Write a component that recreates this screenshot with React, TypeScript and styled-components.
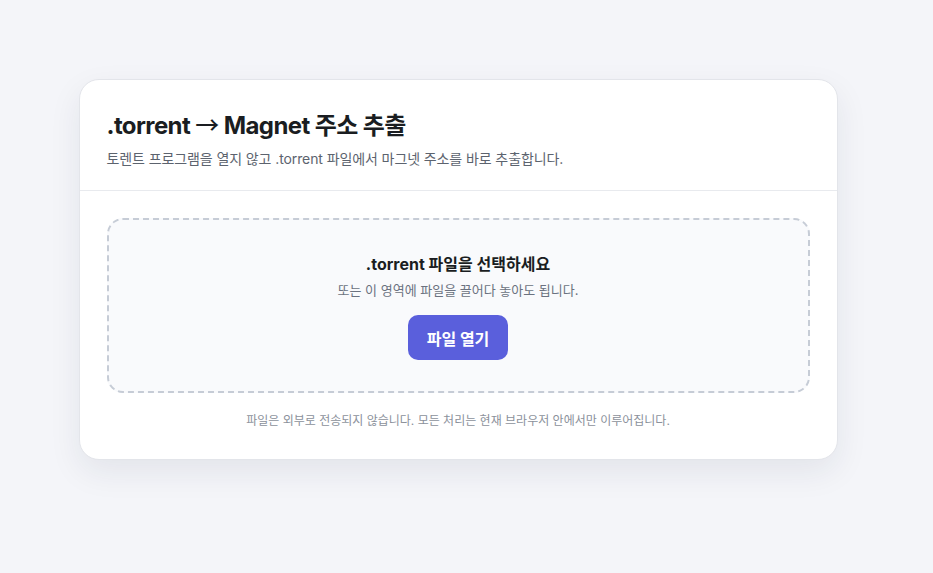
import React from "react";
import styled, { createGlobalStyle } from "styled-components";

const GlobalStyle = createGlobalStyle`
  html, body {
    margin: 0;
    padding: 0;
    background: #f4f5f9;
    font-family: "Inter", "Noto Sans CJK KR", sans-serif;
    color: #1f2328;
  }
  * { box-sizing: border-box; }
`;

const Page = styled.div`
  display: flex;
  align-items: flex-start;
  justify-content: center;
  padding: 79px 17px 0 0;
  min-height: 573px;
`;

const Card = styled.div`
  width: 759px;
  background: #ffffff;
  border: 1px solid #e3e5ea;
  border-radius: 20px;
  box-shadow: 0 12px 32px rgba(30, 40, 70, 0.08);
`;

const Header = styled.div`
  padding: 28px 27px 21px;
  border-bottom: 1px solid #e8eaee;
`;

const Title = styled.h1`
  margin: 0;
  font-size: 24px;
  font-weight: 700;
  line-height: 32px;
  letter-spacing: -0.6px;
  color: #1a1d21;
`;

const Arrow = styled.span`
  font-family: "Noto Sans CJK KR", sans-serif;
  font-weight: 500;
`;

const Subtitle = styled.p`
  margin: 7px 0 0;
  font-size: 14px;
  line-height: 20px;
  letter-spacing: -0.1px;
  color: #5c636e;
`;

const Body = styled.div`
  padding: 27px 27px 29px;
`;

const DropZone = styled.div`
  border: 2px dashed #c6ccd6;
  border-radius: 16px;
  background: #f9fafc;
  height: 175px;
  display: flex;
  flex-direction: column;
  align-items: center;
  padding-top: 32px;
`;

const DropTitle = styled.div`
  font-size: 16px;
  font-weight: 700;
  line-height: 24px;
  color: #1a1d21;
`;

const DropHint = styled.div`
  margin-top: 5px;
  font-size: 13px;
  line-height: 18px;
  color: #6b7280;
`;

const OpenButton = styled.button`
  margin-top: 16px;
  width: 100px;
  height: 45px;
  border: none;
  border-radius: 10px;
  background: #5a5fdc;
  color: #ffffff;
  font-family: inherit;
  font-size: 16px;
  font-weight: 700;
  cursor: pointer;
`;

const Note = styled.p`
  margin: 19px 0 0;
  text-align: center;
  font-size: 12px;
  line-height: 18px;
  color: #8b919b;
`;

export default function App() {
  return (
    <>
      <GlobalStyle />
      <Page>
        <Card>
          <Header>
            <Title>.torrent <Arrow>→</Arrow> Magnet 주소 추출</Title>
            <Subtitle>토렌트 프로그램을 열지 않고 .torrent 파일에서 마그넷 주소를 바로 추출합니다.</Subtitle>
          </Header>
          <Body>
            <DropZone>
              <DropTitle>.torrent 파일을 선택하세요</DropTitle>
              <DropHint>또는 이 영역에 파일을 끌어다 놓아도 됩니다.</DropHint>
              <OpenButton type="button">파일 열기</OpenButton>
            </DropZone>
            <Note>파일은 외부로 전송되지 않습니다. 모든 처리는 현재 브라우저 안에서만 이루어집니다.</Note>
          </Body>
        </Card>
      </Page>
    </>
  );
}
